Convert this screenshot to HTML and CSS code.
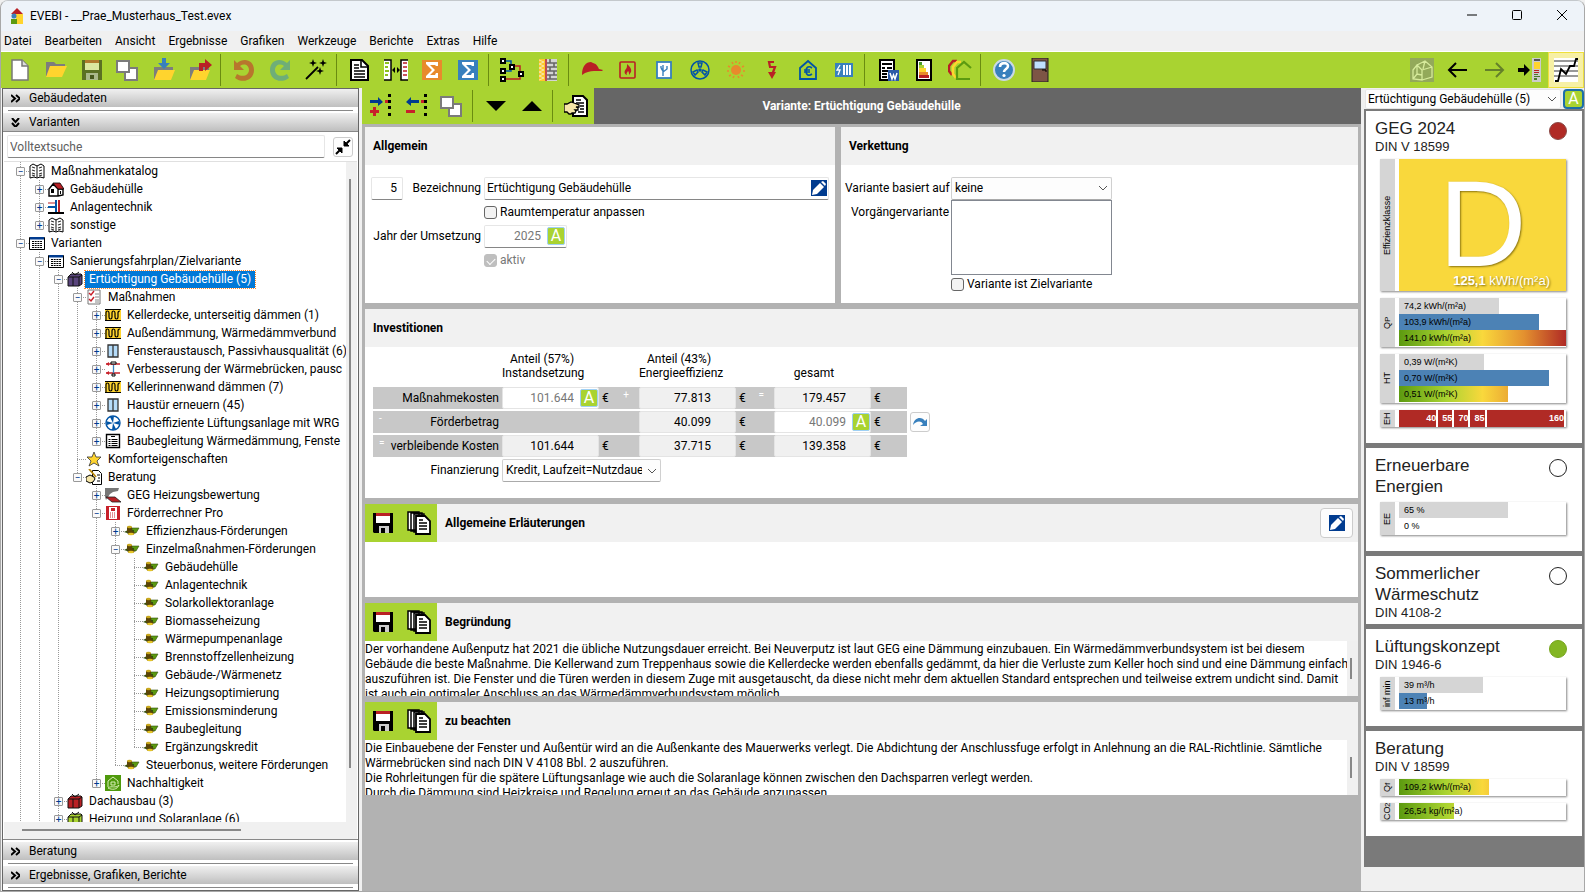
FILE: index.html
```html
<!DOCTYPE html>
<html lang="de">
<head>
    <meta charset="UTF-8">
    <meta name="viewport" content="width=device-width, initial-scale=1.0">
    <title>EVEBI - __Prae_Musterhaus_Test.evex</title>
    <link rel="stylesheet" href="styles.css">
</head>
<body>
    <!-- Icon sprite -->
    <svg class="sprite" xmlns="http://www.w3.org/2000/svg">
        <symbol id="i-new" viewBox="0 0 24 24"><path d="M4 2h10l6 6v14H4z" fill="#fff" stroke="#777" stroke-width="1.5"/><path d="M14 2v6h6" fill="#ddd" stroke="#777" stroke-width="1.5"/></symbol>
        <symbol id="i-open" viewBox="0 0 24 24"><path d="M2 4h8l2 2h9v5H2z" fill="#7d7d7d"/><path d="M2 4v14h3V8z" fill="#7d7d7d"/><path d="M6 8h17l-5 11H2z" fill="#ffd42e"/></symbol>
        <symbol id="i-save" viewBox="0 0 24 24"><path d="M2 2h20v20H2z" fill="#5a7023"/><path d="M5 2h14v3H5z" fill="#b07a2c"/><path d="M5 5h14v7H5z" fill="#dbe79f"/><path d="M6 15h12v7H6z" fill="#a9b88a"/><path d="M10 17h4v4h-4z" fill="#46571c"/></symbol>
        <symbol id="i-copy" viewBox="0 0 24 24"><path d="M9 10h12v12H9z" fill="#fff" stroke="#7b7b7b" stroke-width="2"/><path d="M1 3h12v11H1z" fill="#fff" stroke="#7b7b7b" stroke-width="2"/></symbol>
        <symbol id="i-import" viewBox="0 0 24 24"><path d="M2 9h19v3L6 13v9H2z" fill="#7d7d7d"/><path d="M6 12h17l-4 10H2z" fill="#ffd42e"/><path d="M10 0h4v5h4l-6 6-6-6h4z" fill="#3880bd"/></symbol>
        <symbol id="i-export" viewBox="0 0 24 24"><path d="M2 9h19v3L6 13v9H2z" fill="#7d7d7d"/><path d="M6 12h16l-4 10H2z" fill="#ffd42e"/><path d="M11 13V5h6V1l7 6-7 6V9h-2v4z" fill="#b92025"/></symbol>
        <symbol id="i-undo" viewBox="0 0 24 24"><path d="M2 2v10h10L8 8c4-3 9-1 9 4s-6 8-12 4l-2 4c8 6 19 2 19-8S12-1 5 5z" fill="#b8762d"/></symbol>
        <symbol id="i-redo" viewBox="0 0 24 24"><path d="M22 2v10H12l4-4c-4-3-9-1-9 4s6 8 12 4l2 4C13 26 2 22 2 12S12-1 19 5z" fill="#6fae77"/></symbol>
        <symbol id="i-wand" viewBox="0 0 24 24"><path d="M2 21L14 9" stroke="#000" stroke-width="1.8"/><path d="M9 1l1 3 3 1-3 1-1 3-1-3-3-1 3-1zM19 1l1 3 3 1-3 1-1 3-1-3-3-1 3-1zM16 9l1 3 3 1-3 1-1 3-1-3-3-1 3-1z" fill="#000"/></symbol>
        <symbol id="i-doc" viewBox="0 0 24 24"><path d="M3 2h11l6 6v14H3z" fill="#fff" stroke="#000" stroke-width="2"/><path d="M13 2v7h7M6 7h5M6 10h5M6 13h11M6 16h11M6 19h11" fill="none" stroke="#000" stroke-width="1.6"/></symbol>
        <symbol id="i-compare" viewBox="0 0 24 24"><path d="M0 2h7v20H0M24 2h-7v20h7" fill="#fff" stroke="#000" stroke-width="1.5"/><path d="M1 5h4M1 9h3M1 13h4M1 17h3" stroke="#8cbf1f" stroke-width="2"/><path d="M19 5h4M19 9h4M19 13h4M19 17h4" stroke="#b92025" stroke-width="1.5"/><path d="M8 12l3-3v6zM16 12l-3-3v6z" fill="#000"/></symbol>
        <symbol id="i-sum" viewBox="0 0 24 24"><path d="M2 2h20v20H2z" fill="currentColor"/><path d="M6 4h12v4h-2l-1-1h-5l5 5-5 5h5l1-2h2v5H6v-2l6-6-6-6z" fill="#fff"/></symbol>
        <symbol id="i-flow" viewBox="0 0 24 24"><path d="M4 3h7v5h2M4 13h7V9" fill="none" stroke="#0054a6" stroke-width="1.5"/><path d="M14 8h6v6M5 21h15v-6" fill="none" stroke="#b92025" stroke-width="1.5"/><path d="M0 0h6v6H0zM0 10h6v6H0zM0 18h6v6H0zM9 6h6v6H9zM18 13h6v6h-6z" fill="#000"/><path d="M2 2h2v2H2zM2 12h2v2H2zM2 20h2v2H2zM11 8h2v2h-2zM20 15h2v2h-2z" fill="#fff"/></symbol>
        <symbol id="i-wall" viewBox="0 0 24 24"><path d="M3 1h18v22H3z" fill="#d4d4d4"/><path d="M3 1h6v22H3z" fill="#ffc928"/><path d="M3 2l5 2-5 2 5 2-5 2 5 2-5 2 5 2-5 2 5 2-5 2" fill="none" stroke="#f6e7ae" stroke-width="1"/><path d="M10 1v22" stroke="#b92025" stroke-width="1.5"/><path d="M11 5h10M11 9h10M11 13h10M11 17h10M11 21h10M14 1v4M18 5v4M14 9v4M18 13v4M14 17v4" stroke="#666" stroke-width="1.6"/></symbol>
        <symbol id="i-cap" viewBox="0 0 24 24"><path d="M2 17C2 8 6 4 11 4l2 1c4 1 5 4 6 6l4 1-1 1H14c-4 0-8 1-12 4z" fill="#b92025"/></symbol>
        <symbol id="i-fire" viewBox="0 0 24 24"><rect x="4" y="4" width="15" height="16" rx="1" fill="none" stroke="#b92025" stroke-width="1.6"/><path d="M11 6c3 3 5 5 4 8l-2 3c0-2 0-3-1-4-1 2-2 2-1 4-3-1-3-4-1-6 1-1 1-3 1-5z" fill="#b92025"/></symbol>
        <symbol id="i-fork" viewBox="0 0 24 24"><rect x="5" y="4" width="14" height="16" fill="#fff" stroke="#3880bd" stroke-width="1.8"/><path d="M11 7v11M9 8v2M15 8v3l-4 3M9 10l2 3" fill="none" stroke="#3880bd" stroke-width="1.4"/></symbol>
        <symbol id="i-fan" viewBox="0 0 24 24"><circle cx="12" cy="12" r="9" fill="none" stroke="#0054a6" stroke-width="1.5"/><circle cx="12" cy="12" r="1.8" fill="#0054a6"/><path d="M10 5h4l-1 4h-2zM5 14l4-2 1 2-3 3zM19 14l-4-2-1 2 3 3z" fill="none" stroke="#0054a6" stroke-width="1.5"/></symbol>
        <symbol id="i-sun" viewBox="0 0 24 24"><circle cx="12" cy="12" r="5" fill="#e88a2c"/><path d="M8 4l1 2M16 4l-1 2M4 8l2 1M20 8l-2 1M3 13h2M21 13h-2M5 18l2-1M19 18l-2-1M9 20l1-2M15 20l-1-2M12 3v2" stroke="#e88a2c" stroke-width="1.5"/></symbol>
        <symbol id="i-bolt" viewBox="0 0 24 24"><path d="M14 4H9l1 5h5l-3 8" fill="none" stroke="#b92025" stroke-width="2.2"/><path d="M8 14h8l-4 7z" fill="#b92025"/></symbol>
        <symbol id="i-euro" viewBox="0 0 24 24"><path d="M4 21V10l8-7 8 7v11z" fill="none" stroke="#0054a6" stroke-width="1.8"/><path d="M16 10c-4-3-6 0-6 3s2 6 6 3M8 12h6M8 14h6" fill="none" stroke="#0054a6" stroke-width="1.6"/></symbol>
        <symbol id="i-heat" viewBox="0 0 24 24"><path d="M3 5h18v14H3z" fill="#3880bd"/><path d="M11 7h2v10h-2zM14 7h2v10h-2zM17 7h2v10h-2z" fill="#fff"/><path d="M8 7l-3 5h3l-2 5" fill="none" stroke="#fff" stroke-width="1.3"/></symbol>
        <symbol id="i-word" viewBox="0 0 24 24"><path d="M4 2h14v20H4z" fill="#fff" stroke="#000" stroke-width="2"/><path d="M6 6h10M6 10h3M11 10h5M6 13h6M6 16h5M6 19h5" stroke="#000" stroke-width="2"/><path d="M12 12h11v11H12z" fill="#2d5aa8"/><path d="M14 15l2 6 1.500-4 1.500 4 2-6" fill="none" stroke="#fff" stroke-width="1.5"/></symbol>
        <symbol id="i-label" viewBox="0 0 24 24"><path d="M5 2h14v20H5z" fill="#fff" stroke="#000" stroke-width="2"/><path d="M7 4h3v3H7z" fill="#4a9b2a"/><path d="M7 7h5v3H7z" fill="#a9d331"/><path d="M7 10h7v4H7z" fill="#ffd42e"/><path d="M7 14h9v3H7z" fill="#e88a2c"/><path d="M7 17h10v3H7z" fill="#b92025"/></symbol>
        <symbol id="i-houses" viewBox="0 0 24 24"><path d="M9 3H5L1 8v5l3 4" fill="none" stroke="#b92025" stroke-width="2.5"/><path d="M13 4H9L5 9v7l3 4" fill="none" stroke="#ffd42e" stroke-width="2.500"/><path d="M23 10l-7-6-7 6v11h13" fill="none" stroke="#5c9a10" stroke-width="2.2"/></symbol>
        <symbol id="i-help" viewBox="0 0 24 24"><circle cx="12" cy="12" r="10" fill="#3880bd" stroke="#c9d8e6" stroke-width="2"/><path d="M8 9c0-5 8-5 8-1 0 3-4 3-4 6" fill="none" stroke="#fff" stroke-width="2.6"/><circle cx="12" cy="17.500" r="1.600" fill="#fff"/></symbol>
        <symbol id="i-door" viewBox="0 0 24 24"><path d="M4 0h16v24H4z" fill="#7d5545" stroke="#222"/><path d="M6 3h12v8H6z" fill="#bfe0ff" stroke="#333"/><path d="M14 12h4v2" fill="none" stroke="#000"/></symbol>
        <symbol id="i-3d" viewBox="0 0 24 24"><path d="M0 0h24v24H0z" fill="#93a95a"/><path d="M3 12l4-5 5 5v10l-9-1zM7 7l8-4 7 6v10l-10 3M12 12l10-3M7 7v9M3 21l4-5 5 1M15 3l-2 8" fill="none" stroke="#d6ea9b" stroke-width="1.300"/></symbol>
        <symbol id="i-left" viewBox="0 0 24 24"><path d="M21 12H3M10 5l-7 7 7 7" fill="none" stroke="currentColor" stroke-width="2"/></symbol>
        <symbol id="i-right" viewBox="0 0 24 24"><path d="M3 12h18M14 5l7 7-7 7" fill="none" stroke="currentColor" stroke-width="2"/></symbol>
        <symbol id="i-dock" viewBox="0 0 24 24"><path d="M0 10h6V6l6 6-6 6v-4H0z" fill="#000"/><path d="M14 0h9v24h-9z" fill="#ccc"/><path d="M16 1h6v2h-6z" fill="#555"/><path d="M16 4h6v7h-6z" fill="#ffd42e"/><path d="M16 12h5v1h-5zM16 14h5v1h-5z" fill="#b92025"/><path d="M16 16h4v1h-4zM16 18h6v1h-6zM16 20h3v2h-3z" fill="#4a7b2a"/></symbol>
        <symbol id="i-chart" viewBox="0 0 24 24"><path d="M0 0h24v24H0z" fill="#fff"/><path d="M0 3h24M0 8h24M0 13h24M0 18h24" stroke="#999" stroke-width="2"/><path d="M1 23h3l3-12 5 5 4-8h4l2-7h2" fill="none" stroke="#000" stroke-width="1.8"/></symbol>
        <symbol id="i-add" viewBox="0 0 24 24"><path d="M2 6h8V3l5 5-5 4V9H2z" fill="#003b8f"/><path d="M5 13h3v3h3v3H8v3H5v-3H2v-3h3z" fill="#c8202a"/><path d="M17 6h3v3h-3z" fill="#c8202a"/><path d="M20 0h3v3h-3zM20 6h3v3h-3zM20 12h3v3h-3zM20 19h3v3h-3z" fill="#000"/></symbol>
        <symbol id="i-del" viewBox="0 0 24 24"><path d="M15 6H7V3L2 8l5 4V9h8z" fill="#003b8f"/><path d="M2 16h9v3H2z" fill="#c8202a"/><path d="M17 6h3v3h-3z" fill="#c8202a"/><path d="M20 0h3v3h-3zM20 6h3v3h-3zM20 12h3v3h-3zM20 19h3v3h-3z" fill="#000"/></symbol>
        <symbol id="i-down" viewBox="0 0 24 24"><path d="M2 7h20L12 17z" fill="#000"/></symbol>
        <symbol id="i-up" viewBox="0 0 24 24"><path d="M2 17h20L12 7z" fill="#000"/></symbol>
        <symbol id="i-hand" viewBox="0 0 24 24"><path d="M9 2h10l4 4v16H9z" fill="#fff" stroke="#000" stroke-width="2"/><path d="M12 6h5M12 9h8M16 12h4M16 15h4M14 18h6" stroke="#000" stroke-width="1.5"/><path d="M0 10h3l4-2 3 1 5 2v2h-3l2 1v2h-3l1 1-1 2h-3l-1 1H5l-2-2H0z" fill="#f6e6a8" stroke="#000" stroke-width="1.3"/></symbol>
        <symbol id="i-disk" viewBox="0 0 24 24"><path d="M2 2h20v20H3l-1-1z" fill="#000"/><path d="M5 2h14v3H5z" fill="#b92025"/><path d="M5 5h14v7H5z" fill="#fff"/><path d="M8 15h10v7H8z" fill="#ccc"/><path d="M10 17h4v5h-4z" fill="#000"/></symbol>
        <symbol id="i-pages" viewBox="0 0 24 24"><path d="M1 1h11v18H1zM4 2h11v18H4zM7 3h10v18H7z" fill="#fff" stroke="#000" stroke-width="1.5"/><path d="M9 5h9l5 5v13H9z" fill="#fff" stroke="#000" stroke-width="1.800"/><path d="M12 9h4M12 12h8M12 15h8M12 18h8" stroke="#000" stroke-width="1.5"/></symbol>
        <symbol id="i-pencil" viewBox="0 0 16 16"><path d="M0 0h16v16H0z" fill="#003b8f"/><path d="M1 15l1-5 7-7 4 4-7 7z" fill="#fff"/><path d="M10 2l2-1 3 3-1 2z" fill="#fff"/></symbol>
        <symbol id="i-jump" viewBox="0 0 16 16"><path d="M1 11c1-8 9-9 12-4l2-2v7H8l3-2c-2-4-7-3-10 1z" fill="#3880bd"/></symbol>
        <symbol id="i-collapse" viewBox="0 0 16 16"><path d="M15 1L11 5M1 15l4-4" stroke="#000" stroke-width="2"/><path d="M9 2v5h5zM7 14V9H2z" fill="#000" stroke="#000"/></symbol>
        <symbol id="i-logo" viewBox="0 0 16 18"><path d="M2 7l6-6 6 6z" fill="#b92025"/><path d="M7 7h7v10H7z" fill="#ffd42e"/><path d="M2 7h5v5H2z" fill="#dfe8f0"/><circle cx="5" cy="9" r="2.500" fill="#3880bd"/><path d="M2 12h6v5H2z" fill="#5c9a10"/></symbol>

        <symbol id="t-book" viewBox="0 0 16 16"><path d="M1 3l3-2 4 2 4-2 3 2v12l-4-1-3 1-3-1-4 1z" fill="#fff" stroke="#000"/><path d="M8 2v13M3 4l3 1M3 7l3 1M3 10l3 1M13 4l-3 1M13 7l-3 1M13 10l-3 1M3 12l3 1M13 12l-3 1" stroke="#333" stroke-width="1.2"/></symbol>
        <symbol id="t-house" viewBox="0 0 16 16"><path d="M1 8l4-5 5 5v7H1zM10 8h5v6l-5 1" fill="#fff" stroke="#000" stroke-width="1.4"/><path d="M5 2h7l4 6h-6z" fill="#b92025" stroke="#000" stroke-width=".8"/><path d="M3 8h3v4H3zM12 10h1v3h-1z" fill="#000"/></symbol>
        <symbol id="t-pipes" viewBox="0 0 16 16"><path d="M0 4h8" stroke="#b92025" stroke-width="1.2"/><path d="M0 8h8M8 1v12" stroke="#0054a6" stroke-width="2"/><path d="M11 1v12" stroke="#b92025" stroke-width="2"/><path d="M0 14h16" stroke="#000" stroke-width="2"/></symbol>
        <symbol id="t-table" viewBox="0 0 16 16"><path d="M.5 2.500h15v12H.5z" fill="#fff" stroke="#000"/><path d="M1 2h14v2.500H1z" fill="#003b8f"/><path d="M3 6.500h10M3 8.500h10M3 10.500h10M3 12.500h10" stroke="#000" stroke-dasharray="2 .7"/></symbol>
        <symbol id="t-box" viewBox="0 0 16 16"><path d="M1 6l3-3h10l1 1v9l-3 2H1z" fill="currentColor" stroke="#111"/><path d="M1 6h11v9M12 6l3-2M6 6v9M5 1l3 3 4-3" fill="none" stroke="#111"/></symbol>
        <symbol id="t-checks" viewBox="0 0 16 16"><path d="M2 1h12v14H2z" fill="#fff" stroke="#777"/><path d="M3 4l2 2 3-4M3 10l2 2 3-4" fill="none" stroke="#c8202a" stroke-width="1.4"/><path d="M9 5h4M9 8h4M9 11h4M9 13h4" stroke="#888"/></symbol>
        <symbol id="t-insul" viewBox="0 0 16 16"><path d="M0 2h16v12H0z" fill="#ffd42e"/><path d="M0 2.500h16M0 13.500h16" stroke="#000"/><path d="M1 13V6q0-2 1.500-2T4 6v4q0 2 1.500 2T7 10V6q0-2 1.500-2T10 6v4q0 2 1.500 2T13 10V6q0-2 2-2" fill="none" stroke="#000" stroke-width="1.200"/></symbol>
        <symbol id="t-window" viewBox="0 0 16 16"><path d="M3 2h10v12H3z" fill="#b5dcfa" stroke="#333" stroke-width="1.300"/><path d="M8 2v12" stroke="#333" stroke-width="1.300"/></symbol>
        <symbol id="t-bridge" viewBox="0 0 16 16"><path d="M1 3h14M1 12h14" stroke="#c8202a" stroke-width="1.300"/><path d="M4 1L1 3l3 2M4 10l-3 2 3 2" fill="#c8202a"/><path d="M8.500 4v8" stroke="#3880bd" stroke-width="1.300"/><path d="M6 1h5v2H6zM7 13h3v2H7z" fill="#fff" stroke="#000"/></symbol>
        <symbol id="t-fan" viewBox="0 0 16 16"><circle cx="8" cy="8" r="7" fill="#fff" stroke="#0054a6" stroke-width="1.400"/><path d="M8 8L5 2l4-1zM8 8l6-2 1 4zM8 8l3 6-4 1zM8 8l-6 2-1-4z" fill="#0054a6"/></symbol>
        <symbol id="t-note" viewBox="0 0 16 16"><path d="M1.500 1.500h13v13h-13z" fill="#fff" stroke="#000" stroke-width="1.400"/><path d="M6 3.500h4M3.500 6.500h2M6.500 6.500h6M3.500 8.500h2M6.500 8.500h6M3.500 10.500h2M6.500 10.500h6M3.500 12.500h2M6.500 12.500h6" stroke="#000"/></symbol>
        <symbol id="t-star" viewBox="0 0 16 16"><path d="M8 1l2 5h5l-4 4 2 5-5-3-5 3 2-5-4-4h5z" fill="#ffd42e" stroke="#333" stroke-width=".8"/></symbol>
        <symbol id="t-advice" viewBox="0 0 16 16"><path d="M6.500 1.500h6l3 3v11h-9z" fill="#fff" stroke="#000"/><path d="M0 8l4-2 4 2 1 2-2 3-3 1-4-2z" fill="#f6e6a8" stroke="#000"/><path d="M3 0l7 8" stroke="#b8860b" stroke-width="1.800"/><path d="M11 6h3M12 9h2M11 12h3" stroke="#000"/></symbol>
        <symbol id="t-geg" viewBox="0 0 16 16"><path d="M0 1h14l-1 3-5 1-3 2-4 6-1-3z" fill="#777"/><path d="M1 10h9l6 5H7z" fill="#b92025" stroke="#222" stroke-width=".8"/></symbol>
        <symbol id="t-calc" viewBox="0 0 16 16"><path d="M1 1h14v14H1z" fill="#c8202a"/><path d="M4 2h8v12H4z" fill="#fff"/><path d="M6 3h4v3H6z" fill="#c8202a"/><path d="M5 8h6M5 10h6M5 12h6" stroke="#c8202a" stroke-dasharray="1 1"/></symbol>
        <symbol id="t-coin" viewBox="0 0 16 16"><path d="M8 5h7l-3 5H8z" fill="#5c9a10" stroke="#33500f" stroke-width=".6"/><path d="M0 9l4-2h6v3l-4 1z" fill="#33500f"/><path d="M3 4h5v5H3z" fill="#5a4508"/><ellipse cx="5.500" cy="4" rx="2.500" ry="1.200" fill="#c9a81c"/><ellipse cx="7" cy="10" rx="3.500" ry="2" fill="#5a4508"/><ellipse cx="7" cy="11" rx="3" ry="1.200" fill="#e5c528"/></symbol>
        <symbol id="t-eco" viewBox="0 0 16 16"><path d="M0 0h16v16H0z" fill="#4f9a0c"/><path d="M3 12V6l5-4 5 4v3M6 7h4v3H6zM3 13c4-3 7 1 11-3-2 5-7 5-11 3z" fill="none" stroke="#d9efb8"/></symbol>
    </svg>

    <div class="window">
        <header class="titlebar">
            <svg class="logo"><use href="#i-logo"/></svg>
            <h1>EVEBI - __Prae_Musterhaus_Test.evex</h1>
            <button type="button" class="win-btn" aria-label="Minimieren"><svg viewBox="0 0 10 10"><path d="M0 5h10"/></svg></button>
            <button type="button" class="win-btn" aria-label="Maximieren"><svg viewBox="0 0 10 10"><rect x=".5" y=".5" width="9" height="9" rx="1"/></svg></button>
            <button type="button" class="win-btn" aria-label="Schließen"><svg viewBox="0 0 10 10"><path d="M0 0l10 10M10 0L0 10"/></svg></button>
        </header>

        <nav class="menubar">
            <a href="#">Datei</a>
            <a href="#">Bearbeiten</a>
            <a href="#">Ansicht</a>
            <a href="#">Ergebnisse</a>
            <a href="#">Grafiken</a>
            <a href="#">Werkzeuge</a>
            <a href="#">Berichte</a>
            <a href="#">Extras</a>
            <a href="#">Hilfe</a>
        </nav>

        <div class="toolbar main-toolbar">
            <button type="button" aria-label="Neu"><svg><use href="#i-new"/></svg></button>
            <button type="button" aria-label="Öffnen"><svg><use href="#i-open"/></svg></button>
            <button type="button" aria-label="Speichern"><svg><use href="#i-save"/></svg></button>
            <button type="button" aria-label="Kopieren"><svg><use href="#i-copy"/></svg></button>
            <button type="button" aria-label="Importieren"><svg><use href="#i-import"/></svg></button>
            <button type="button" aria-label="Exportieren"><svg><use href="#i-export"/></svg></button>
            <span class="sep"></span>
            <button type="button" aria-label="Rückgängig"><svg><use href="#i-undo"/></svg></button>
            <button type="button" aria-label="Wiederholen"><svg><use href="#i-redo"/></svg></button>
            <button type="button" aria-label="Assistent"><svg><use href="#i-wand"/></svg></button>
            <span class="sep"></span>
            <button type="button" aria-label="Dokument"><svg><use href="#i-doc"/></svg></button>
            <button type="button" aria-label="Vergleich"><svg><use href="#i-compare"/></svg></button>
            <button type="button" class="orange" aria-label="Summe"><svg><use href="#i-sum"/></svg></button>
            <button type="button" class="blue" aria-label="Summe Varianten"><svg><use href="#i-sum"/></svg></button>
            <span class="sep"></span>
            <button type="button" aria-label="Struktur"><svg><use href="#i-flow"/></svg></button>
            <button type="button" aria-label="Bauteile"><svg><use href="#i-wall"/></svg></button>
            <span class="sep"></span>
            <button type="button" aria-label="Berater"><svg><use href="#i-cap"/></svg></button>
            <button type="button" aria-label="Heizung"><svg><use href="#i-fire"/></svg></button>
            <button type="button" aria-label="Warmwasser"><svg><use href="#i-fork"/></svg></button>
            <button type="button" aria-label="Lüftung"><svg><use href="#i-fan"/></svg></button>
            <button type="button" aria-label="Solar"><svg><use href="#i-sun"/></svg></button>
            <button type="button" aria-label="Strom"><svg><use href="#i-bolt"/></svg></button>
            <button type="button" aria-label="Kosten"><svg><use href="#i-euro"/></svg></button>
            <button type="button" aria-label="Heizkörper"><svg><use href="#i-heat"/></svg></button>
            <span class="sep"></span>
            <button type="button" aria-label="Word-Bericht"><svg><use href="#i-word"/></svg></button>
            <button type="button" aria-label="Energieausweis"><svg><use href="#i-label"/></svg></button>
            <button type="button" aria-label="Sanierungsfahrplan"><svg><use href="#i-houses"/></svg></button>
            <span class="sep"></span>
            <button type="button" aria-label="Hilfe"><svg><use href="#i-help"/></svg></button>
            <button type="button" aria-label="Beenden"><svg><use href="#i-door"/></svg></button>
            <span class="spacer"></span>
            <button type="button" aria-label="3D-Ansicht"><svg><use href="#i-3d"/></svg></button>
            <button type="button" aria-label="Zurück"><svg><use href="#i-left"/></svg></button>
            <button type="button" class="faded" aria-label="Vor"><svg><use href="#i-right"/></svg></button>
            <button type="button" aria-label="Andocken"><svg><use href="#i-dock"/></svg></button>
            <button type="button" class="pressed" aria-label="Diagramm"><svg><use href="#i-chart"/></svg></button>
        </div>

        <div class="workspace">
            <!-- Navigation -->
            <aside class="sidebar">
                <button type="button" class="fold">
                    <svg viewBox="0 0 9 9"><path d="M0 1l4 3.500L0 8M5 1l4 3.500L5 8"/></svg>Gebäudedaten
                </button>
                <hr>
                <button type="button" class="fold">
                    <svg viewBox="0 0 9 9"><path d="M1 0l3.500 4L8 0M1 5l3.500 4L8 5"/></svg>Varianten
                </button>
                <div class="tree-panel">
                    <div class="search-row">
                        <input type="text" class="field" placeholder="Volltextsuche" aria-label="Volltextsuche">
                        <button type="button" class="small-btn" aria-label="Alle zuklappen"><svg><use href="#i-collapse"/></svg></button>
                    </div>
                    <div class="tree-box">
                        <div class="tree">
                            <ul class="more">
                                <li><div class="row"><button type="button" class="exp">−</button><svg><use href="#t-book"/></svg><span>Maßnahmenkatalog</span></div>
                                    <ul>
                                        <li><div class="row"><button type="button" class="exp">+</button><svg><use href="#t-house"/></svg><span>Gebäudehülle</span></div></li>
                                        <li><div class="row"><button type="button" class="exp">+</button><svg><use href="#t-pipes"/></svg><span>Anlagentechnik</span></div></li>
                                        <li><div class="row"><button type="button" class="exp">+</button><svg><use href="#t-book"/></svg><span>sonstige</span></div></li>
                                    </ul>
                                </li>
                                <li><div class="row"><button type="button" class="exp">−</button><svg><use href="#t-table"/></svg><span>Varianten</span></div>
                                    <ul class="more">
                                        <li><div class="row"><button type="button" class="exp">−</button><svg><use href="#t-table"/></svg><span>Sanierungsfahrplan/Zielvariante</span></div>
                                            <ul class="more">
                                                <li><div class="row"><button type="button" class="exp">−</button><svg class="box-violet"><use href="#t-box"/></svg><span class="selected">Ertüchtigung Gebäudehülle (5)</span></div>
                                                    <ul>
                                                        <li><div class="row"><button type="button" class="exp">−</button><svg><use href="#t-checks"/></svg><span>Maßnahmen</span></div>
                                                            <ul>
                                                                <li><div class="row"><button type="button" class="exp">+</button><svg><use href="#t-insul"/></svg><span>Kellerdecke, unterseitig dämmen (1)</span></div></li>
                                                                <li><div class="row"><button type="button" class="exp">+</button><svg><use href="#t-insul"/></svg><span>Außendämmung, Wärmedämmverbund</span></div></li>
                                                                <li><div class="row"><button type="button" class="exp">+</button><svg><use href="#t-window"/></svg><span>Fensteraustausch, Passivhausqualität (6)</span></div></li>
                                                                <li><div class="row"><button type="button" class="exp">+</button><svg><use href="#t-bridge"/></svg><span>Verbesserung der Wärmebrücken, pausc</span></div></li>
                                                                <li><div class="row"><button type="button" class="exp">+</button><svg><use href="#t-insul"/></svg><span>Kellerinnenwand dämmen (7)</span></div></li>
                                                                <li><div class="row"><button type="button" class="exp">+</button><svg><use href="#t-window"/></svg><span>Haustür erneuern (45)</span></div></li>
                                                                <li><div class="row"><button type="button" class="exp">+</button><svg><use href="#t-fan"/></svg><span>Hocheffiziente Lüftungsanlage mit WRG</span></div></li>
                                                                <li><div class="row"><button type="button" class="exp">+</button><svg><use href="#t-note"/></svg><span>Baubegleitung Wärmedämmung, Fenste</span></div></li>
                                                            </ul>
                                                        </li>
                                                        <li><div class="row leaf"><svg><use href="#t-star"/></svg><span>Komforteigenschaften</span></div></li>
                                                        <li><div class="row"><button type="button" class="exp">−</button><svg><use href="#t-advice"/></svg><span>Beratung</span></div>
                                                            <ul>
                                                                <li><div class="row"><button type="button" class="exp">+</button><svg><use href="#t-geg"/></svg><span>GEG Heizungsbewertung</span></div></li>
                                                                <li><div class="row"><button type="button" class="exp">−</button><svg><use href="#t-calc"/></svg><span>Förderrechner Pro</span></div>
                                                                    <ul>
                                                                        <li><div class="row"><button type="button" class="exp">+</button><svg><use href="#t-coin"/></svg><span>Effizienzhaus-Förderungen</span></div></li>
                                                                        <li><div class="row"><button type="button" class="exp">−</button><svg><use href="#t-coin"/></svg><span>Einzelmaßnahmen-Förderungen</span></div>
                                                                            <ul>
                                                                                <li><div class="row leaf"><svg><use href="#t-coin"/></svg><span>Gebäudehülle</span></div></li>
                                                                                <li><div class="row leaf"><svg><use href="#t-coin"/></svg><span>Anlagentechnik</span></div></li>
                                                                                <li><div class="row leaf"><svg><use href="#t-coin"/></svg><span>Solarkollektoranlage</span></div></li>
                                                                                <li><div class="row leaf"><svg><use href="#t-coin"/></svg><span>Biomasseheizung</span></div></li>
                                                                                <li><div class="row leaf"><svg><use href="#t-coin"/></svg><span>Wärmepumpenanlage</span></div></li>
                                                                                <li><div class="row leaf"><svg><use href="#t-coin"/></svg><span>Brennstoffzellenheizung</span></div></li>
                                                                                <li><div class="row leaf"><svg><use href="#t-coin"/></svg><span>Gebäude-/Wärmenetz</span></div></li>
                                                                                <li><div class="row leaf"><svg><use href="#t-coin"/></svg><span>Heizungsoptimierung</span></div></li>
                                                                                <li><div class="row leaf"><svg><use href="#t-coin"/></svg><span>Emissionsminderung</span></div></li>
                                                                                <li><div class="row leaf"><svg><use href="#t-coin"/></svg><span>Baubegleitung</span></div></li>
                                                                                <li><div class="row leaf"><svg><use href="#t-coin"/></svg><span>Ergänzungskredit</span></div></li>
                                                                            </ul>
                                                                        </li>
                                                                        <li><div class="row leaf"><svg><use href="#t-coin"/></svg><span>Steuerbonus, weitere Förderungen</span></div></li>
                                                                    </ul>
                                                                </li>
                                                                <li><div class="row"><button type="button" class="exp">+</button><svg><use href="#t-eco"/></svg><span>Nachhaltigkeit</span></div></li>
                                                            </ul>
                                                        </li>
                                                    </ul>
                                                </li>
                                                <li><div class="row"><button type="button" class="exp">+</button><svg class="box-red"><use href="#t-box"/></svg><span>Dachausbau (3)</span></div></li>
                                                <li><div class="row"><button type="button" class="exp">+</button><svg class="box-green"><use href="#t-box"/></svg><span>Heizung und Solaranlage (6)</span></div></li>
                                            </ul>
                                        </li>
                                    </ul>
                                </li>
                            </ul>
                        </div>
                        <div class="vscroll"><span></span></div>
                    </div>
                    <div class="hscroll"><span></span></div>
                </div>
                <button type="button" class="fold">
                    <svg viewBox="0 0 9 9"><path d="M0 1l4 3.500L0 8M5 1l4 3.500L5 8"/></svg>Beratung
                </button>
                <hr>
                <button type="button" class="fold">
                    <svg viewBox="0 0 9 9"><path d="M0 1l4 3.500L0 8M5 1l4 3.500L5 8"/></svg>Ergebnisse, Grafiken, Berichte
                </button>
                <hr>
            </aside>

            <!-- Variante -->
            <main class="content">
                <div class="content-head">
                    <div class="toolbar">
                        <button type="button" aria-label="Hinzufügen"><svg><use href="#i-add"/></svg></button>
                        <button type="button" aria-label="Entfernen"><svg><use href="#i-del"/></svg></button>
                        <button type="button" aria-label="Kopieren"><svg><use href="#i-copy"/></svg></button>
                        <span class="sep"></span>
                        <button type="button" aria-label="Nach unten"><svg><use href="#i-down"/></svg></button>
                        <button type="button" aria-label="Nach oben"><svg><use href="#i-up"/></svg></button>
                        <span class="sep"></span>
                        <button type="button" aria-label="Bericht"><svg><use href="#i-hand"/></svg></button>
                    </div>
                    <h2>Variante: Ertüchtigung Gebäudehülle</h2>
                </div>

                <div class="cards">
                    <div class="card-pair">
                        <section class="card">
                            <h3>Allgemein</h3>
                            <div class="form form-general">
                                <div class="name-label">
                                    <input type="text" class="field num" value="5" aria-label="Nummer">
                                    <label for="bezeichnung">Bezeichnung</label>
                                </div>
                                <div class="field with-icon">
                                    <input type="text" id="bezeichnung" value="Ertüchtigung Gebäudehülle">
                                    <button type="button" class="icon-btn" aria-label="Bearbeiten"><svg><use href="#i-pencil"/></svg></button>
                                </div>
                                <label class="check"><input type="checkbox">Raumtemperatur anpassen</label>
                                <label for="jahr">Jahr der Umsetzung</label>
                                <div class="field with-icon year">
                                    <input type="text" id="jahr" class="muted" value="2025">
                                    <button type="button" class="auto">A</button>
                                </div>
                                <label class="check muted"><input type="checkbox" checked disabled>aktiv</label>
                            </div>
                        </section>

                        <section class="card">
                            <h3>Verkettung</h3>
                            <div class="form form-chain">
                                <label for="basis">Variante basiert auf</label>
                                <select id="basis"><option>keine</option></select>
                                <label for="vorgaenger">Vorgängervariante</label>
                                <select id="vorgaenger" class="list" multiple></select>
                                <label class="check"><input type="checkbox">Variante ist Zielvariante</label>
                            </div>
                        </section>
                    </div>

                    <section class="card">
                        <h3>Investitionen</h3>
                        <div class="invest">
                            <table>
                                <thead>
                                    <tr>
                                        <td></td>
                                        <th scope="col">Anteil (57%)<br>Instandsetzung</th>
                                        <td></td>
                                        <th scope="col">Anteil (43%)<br>Energieeffizienz</th>
                                        <td></td>
                                        <th scope="col">gesamt</th>
                                        <td></td>
                                        <td></td>
                                    </tr>
                                </thead>
                                <tbody>
                                    <tr>
                                        <th scope="row"><div class="row-head"><label for="mk1">Maßnahmekosten</label></div></th>
                                        <td><div class="amount editable"><input type="text" id="mk1" value="101.644"><button type="button" class="auto">A</button></div></td>
                                        <td><div class="unit">€<sup>+</sup></div></td>
                                        <td><div class="amount"><input type="text" value="77.813" readonly aria-label="Maßnahmekosten Energieeffizienz"></div></td>
                                        <td><div class="unit">€<sup>=</sup></div></td>
                                        <td><div class="amount"><input type="text" value="179.457" readonly aria-label="Maßnahmekosten gesamt"></div></td>
                                        <td><div class="unit">€</div></td>
                                        <td class="plain"></td>
                                    </tr>
                                    <tr>
                                        <th scope="row"><div class="row-head"><sup>-</sup><label for="fb3">Förderbetrag</label></div></th>
                                        <td></td>
                                        <td></td>
                                        <td><div class="amount"><input type="text" value="40.099" readonly aria-label="Förderbetrag Energieeffizienz"></div></td>
                                        <td><div class="unit">€</div></td>
                                        <td><div class="amount editable"><input type="text" id="fb3" value="40.099"><button type="button" class="auto">A</button></div></td>
                                        <td><div class="unit">€</div></td>
                                        <td class="plain"><button type="button" class="small-btn" aria-label="Zum Förderrechner"><svg><use href="#i-jump"/></svg></button></td>
                                    </tr>
                                    <tr>
                                        <th scope="row"><div class="row-head"><sup>=</sup><label for="vk1">verbleibende Kosten</label></div></th>
                                        <td><div class="amount"><input type="text" id="vk1" value="101.644" readonly></div></td>
                                        <td><div class="unit">€</div></td>
                                        <td><div class="amount"><input type="text" value="37.715" readonly aria-label="verbleibende Kosten Energieeffizienz"></div></td>
                                        <td><div class="unit">€</div></td>
                                        <td><div class="amount"><input type="text" value="139.358" readonly aria-label="verbleibende Kosten gesamt"></div></td>
                                        <td><div class="unit">€</div></td>
                                        <td class="plain"></td>
                                    </tr>
                                </tbody>
                            </table>
                            <div class="finance">
                                <label for="finanzierung">Finanzierung</label>
                                <select id="finanzierung"><option>Kredit, Laufzeit=Nutzdauer</option></select>
                            </div>
                        </div>
                    </section>

                    <section class="card">
                        <div class="note-head">
                            <div class="toolbar">
                                <button type="button" aria-label="Speichern"><svg><use href="#i-disk"/></svg></button>
                                <button type="button" aria-label="Textbausteine"><svg><use href="#i-pages"/></svg></button>
                            </div>
                            <h3 id="n1">Allgemeine Erläuterungen</h3>
                            <button type="button" class="edit-btn" aria-label="Bearbeiten"><svg><use href="#i-pencil"/></svg></button>
                        </div>
                        <div class="note"><textarea aria-labelledby="n1"></textarea></div>
                    </section>

                    <section class="card">
                        <div class="note-head">
                            <div class="toolbar">
                                <button type="button" aria-label="Speichern"><svg><use href="#i-disk"/></svg></button>
                                <button type="button" aria-label="Textbausteine"><svg><use href="#i-pages"/></svg></button>
                            </div>
                            <h3 id="n2">Begründung</h3>
                        </div>
                        <div class="note">
                            <textarea aria-labelledby="n2">Der vorhandene Außenputz hat 2021 die übliche Nutzungsdauer erreicht. Bei Neuverputz ist laut GEG eine Dämmung einzubauen. Ein Wärmedämmverbundsystem ist bei diesem
Gebäude die beste Maßnahme. Die Kellerwand zum Treppenhaus sowie die Kellerdecke werden ebenfalls gedämmt, da hier die Verluste zum Keller hoch sind und eine Dämmung einfach
auszuführen ist. Die Fenster und die Türen werden in diesem Zuge mit ausgetauscht, da diese nicht mehr dem aktuellen Standard entsprechen und teilweise extrem undicht sind. Damit
ist auch ein optimaler Anschluss an das Wärmedämmverbundsystem möglich.</textarea>
                            <div class="vscroll"><span></span></div>
                        </div>
                    </section>

                    <section class="card">
                        <div class="note-head">
                            <div class="toolbar">
                                <button type="button" aria-label="Speichern"><svg><use href="#i-disk"/></svg></button>
                                <button type="button" aria-label="Textbausteine"><svg><use href="#i-pages"/></svg></button>
                            </div>
                            <h3 id="n3">zu beachten</h3>
                        </div>
                        <div class="note">
                            <textarea aria-labelledby="n3">Die Einbauebene der Fenster und Außentür wird an die Außenkante des Mauerwerks verlegt. Die Abdichtung der Anschlussfuge erfolgt in Anlehnung an die RAL-Richtlinie. Sämtliche
Wärmebrücken sind nach DIN V 4108 Bbl. 2 auszuführen.
Die Rohrleitungen für die spätere Lüftungsanlage wie auch die Solaranlage können zwischen den Dachsparren verlegt werden.
Durch die Dämmung sind Heizkreise und Regelung erneut an das Gebäude anzupassen.</textarea>
                            <div class="vscroll"><span></span></div>
                        </div>
                    </section>
                </div>
            </main>

            <!-- Kennwerte -->
            <aside class="results">
                <div class="results-head">
                    <select aria-label="Variante"><option>Ertüchtigung Gebäudehülle (5)</option></select>
                    <button type="button" class="auto">A</button>
                </div>
                <div class="results-body">
                    <section class="result">
                        <div class="result-head">
                            <div><h4>GEG 2024</h4><p>DIN V 18599</p></div>
                            <span class="lamp red"></span>
                        </div>
                        <div class="gauges">
                            <div class="gauge">
                                <span class="axis">Effizienzklasse</span>
                                <div class="class-box">
                                    <span class="letter">D</span>
                                    <span class="value"><b>125,1</b> kWh/(m²a)</span>
                                </div>
                            </div>
                            <div class="gauge">
                                <span class="axis">Q<small>P</small></span>
                                <div class="bars">
                                    <div class="bar gray" style="width: 60%">74,2 kWh/(m²a)</div>
                                    <div class="bar blue" style="width: 84%">103,9 kWh/(m²a)</div>
                                    <div class="bar scale" style="width: 100%">141,0 kWh/(m²a)</div>
                                </div>
                            </div>
                            <div class="gauge">
                                <span class="axis">HT</span>
                                <div class="bars">
                                    <div class="bar gray" style="width: 51%">0,39 W/(m²K)</div>
                                    <div class="bar blue" style="width: 90%">0,70 W/(m²K)</div>
                                    <div class="bar scale" style="width: 65%">0,51 W/(m²K)</div>
                                </div>
                            </div>
                            <div class="gauge">
                                <span class="axis">EH</span>
                                <div class="steps">
                                    <span style="flex-grow: 37">40</span>
                                    <span style="flex-grow: 14">55</span>
                                    <span style="flex-grow: 14">70</span>
                                    <span style="flex-grow: 14">85</span>
                                    <span style="flex-grow: 77">160</span>
                                </div>
                            </div>
                        </div>
                    </section>

                    <section class="result">
                        <div class="result-head">
                            <div><h4>Erneuerbare<br>Energien</h4></div>
                            <span class="lamp"></span>
                        </div>
                        <div class="gauges">
                            <div class="gauge">
                                <span class="axis">EE</span>
                                <div class="bars">
                                    <div class="bar gray" style="width: 65%">65 %</div>
                                    <div class="bar" style="width: 0%">0 %</div>
                                </div>
                            </div>
                        </div>
                    </section>

                    <section class="result">
                        <div class="result-head">
                            <div><h4>Sommerlicher<br>Wärmeschutz</h4><p>DIN 4108-2</p></div>
                            <span class="lamp"></span>
                        </div>
                    </section>

                    <section class="result">
                        <div class="result-head">
                            <div><h4>Lüftungskonzept</h4><p>DIN 1946-6</p></div>
                            <span class="lamp green"></span>
                        </div>
                        <div class="gauges">
                            <div class="gauge">
                                <span class="axis">inf min</span>
                                <div class="bars">
                                    <div class="bar gray" style="width: 50%">39 m³/h</div>
                                    <div class="bar blue" style="width: 17%">13 m³/h</div>
                                </div>
                            </div>
                        </div>
                    </section>

                    <section class="result">
                        <div class="result-head">
                            <div><h4>Beratung</h4><p>DIN V 18599</p></div>
                        </div>
                        <div class="gauges">
                            <div class="gauge">
                                <span class="axis">Q<small>f</small></span>
                                <div class="bars"><div class="bar scale" style="width: 54%">109,2 kWh/(m²a)</div></div>
                            </div>
                            <div class="gauge">
                                <span class="axis">CO<small>2</small></span>
                                <div class="bars"><div class="bar scale" style="width: 33%">26,54 kg/(m²a)</div></div>
                            </div>
                        </div>
                    </section>
                </div>
            </aside>
        </div>
    </div>
</body>
</html>
```
FILE: styles.css
```css
:root {
    --green: #a9d331;
    --gray: #b2b2b2;
    --light: #f0f0f0;
    --head: #f1f1f1;
    --red: #b02a25;
    --blue: #4c82b5;
    --navy: #003b8f;
}

* {
    box-sizing: border-box;
}

body {
    margin: 0;
    font-family: Roboto, "Noto Sans", sans-serif;
    font-size: 12px;
    line-height: 15px;
    color: #000;
    background: var(--light);
}

button, input, select, textarea {
    font: inherit;
    color: inherit;
    margin: 0;
    padding: 0;
    border: none;
    outline: none;
    background: none;
    border-radius: 0;
}

h1, h2, h3, h4, p, ul {
    margin: 0;
    padding: 0;
}

.sprite {
    display: none;
}

.muted {
    color: #777;
}

.window {
    display: flex;
    flex-direction: column;
    height: 100vh;
    border: 1px solid #a8a8a8;
    border-top-color: #c4c8cc;
    border-radius: 8px 8px 0 0;
    overflow: hidden;
}

/* Title bar and menu */
.titlebar {
    display: flex;
    align-items: center;
    flex: none;
    height: 30px;
    padding-left: 8px;
    background: #eef3f9;
}

.titlebar h1 {
    flex: 1;
    font-size: 12px;
    font-weight: normal;
}

.logo {
    width: 16px;
    height: 18px;
    margin-right: 5px;
}

.win-btn {
    width: 45px;
    height: 28px;
}

.win-btn svg {
    width: 10px;
    height: 10px;
    fill: none;
    stroke: #000;
    overflow: visible;
}

.menubar {
    display: flex;
    align-items: center;
    flex: none;
    gap: 13px;
    height: 21px;
    padding-left: 3px;
    border-bottom: 1px solid #fff;
}

.menubar a {
    color: #000;
    text-decoration: none;
}

/* Toolbars */
.toolbar {
    display: flex;
    align-items: center;
    height: 36px;
    background: var(--green);
}

.toolbar button {
    display: flex;
    align-items: center;
    justify-content: center;
    flex: none;
    width: 36px;
    height: 36px;
}

.toolbar svg {
    width: 24px;
    height: 24px;
}

.main-toolbar {
    flex: none;
    padding-left: 1px;
}

.sep {
    flex: none;
    width: 8px;
    height: 32px;
    background: linear-gradient(#6a8c10, #6a8c10) 2px 0 / 1px 100% no-repeat;
}

.spacer {
    flex: 1;
}

.toolbar .orange {
    color: #e88a2c;
}

.toolbar .blue {
    color: #3880bd;
}

.toolbar .faded {
    color: #64802a;
}

.toolbar .pressed {
    background: #f7f0a5;
    border: 1px solid #efe03c;
}

.workspace {
    flex: 1;
    display: grid;
    grid-template-columns: 357px minmax(0, 1fr) 220px;
    grid-template-rows: minmax(0, 1fr);
    column-gap: 3px;
    min-height: 0;
    padding-left: 1px;
}

/* Sidebar */
.sidebar {
    display: flex;
    flex-direction: column;
    min-height: 0;
    border: 1px solid #666;
    background: #fff;
}

.fold {
    display: flex;
    align-items: center;
    flex: none;
    gap: 9px;
    height: 18px;
    padding-left: 8px;
    background: linear-gradient(#f0f0f0, #bfbfbf);
}

.fold svg {
    width: 9px;
    height: 9px;
    fill: none;
    stroke: #000;
    stroke-width: 2;
}

.sidebar hr {
    flex: none;
    width: calc(100% - 10px);
    margin: 3px 5px 2px;
    border: none;
    border-top: 1px solid #888;
}

.tree-panel {
    flex: 1;
    display: flex;
    flex-direction: column;
    min-height: 0;
    margin-bottom: 2px;
    border-top: 1px solid #888;
    border-bottom: 1px solid #888;
}

.search-row {
    display: flex;
    align-items: center;
    flex: none;
    gap: 8px;
    height: 29px;
    padding: 0 5px 0 4px;
}

.field {
    width: 100%;
    height: 23px;
    padding: 0 2px;
    border: 1px solid #e6e6e6;
    border-bottom-color: #868686;
    border-radius: 2px;
    background: #fff;
}

.field::placeholder {
    color: #5e5e5e;
    opacity: 1;
}

.small-btn {
    display: inline-flex;
    align-items: center;
    justify-content: center;
    flex: none;
    width: 20px;
    height: 20px;
    border: 1px solid #ccc;
    border-radius: 3px;
    background: #fdfdfd;
}

.small-btn svg {
    width: 16px;
    height: 16px;
}

.tree-box {
    flex: 1;
    display: flex;
    min-height: 0;
    margin: 0 1px;
    border-top: 1px solid #e0e0e0;
}

.tree {
    flex: 1;
    min-width: 0;
    overflow: hidden;
    padding-left: 12px;
}

.tree ul {
    list-style: none;
}

.tree ul ul {
    padding-left: 19px;
}

/* dotted guide along each list of siblings */
.tree li {
    background: repeating-linear-gradient(#999 0 1px, transparent 1px 2px) 4px 0 / 1px 100% no-repeat;
}

.tree li:last-child {
    background-size: 1px 9px;
}

.tree .more > li:last-child {
    background-size: 1px 1000px;
}

.row {
    display: flex;
    align-items: center;
    height: 18px;
    white-space: nowrap;
    background: repeating-linear-gradient(90deg, #999 0 1px, transparent 1px 2px) 4px 9px / 10px 1px no-repeat;
}

.row.leaf {
    padding-left: 13px;
}

.row svg {
    flex: none;
    width: 16px;
    height: 16px;
    margin-right: 2px;
}

.row span {
    padding: 1px 4px;
}

.row .selected {
    color: #fff;
    background: #0078d7;
    outline: 1px dotted #ff8728;
}

.exp {
    flex: none;
    width: 9px;
    height: 9px;
    margin-right: 4px;
    border: 1px solid #999;
    border-radius: 1px;
    background: #fafafa;
    color: var(--navy);
    font-size: 10px;
    line-height: 7px;
}

.box-violet {
    color: #59447c;
}

.box-red {
    color: #b92025;
}

.box-green {
    color: #a9d331;
}

.vscroll {
    display: flex;
    flex: none;
    width: 11px;
    padding: 17px 0 17px 3px;
    background: var(--light);
}

.vscroll span {
    width: 2px;
    background: #888;
}

.tree-box .vscroll {
    padding-bottom: 54px;
}

.hscroll {
    flex: none;
    height: 17px;
    margin: 0 1px;
    padding: 7px 116px 0 18px;
    background: var(--light);
}

.hscroll span {
    display: block;
    height: 2px;
    background: #888;
}

/* Content */
.content {
    min-width: 0;
    background: var(--gray);
}

.content-head {
    display: grid;
    grid-template-columns: 1fr auto 1fr;
    align-items: center;
    background: #666;
}

.content-head .toolbar {
    justify-self: start;
}

.content-head h2 {
    font-size: 12px;
    color: #fff;
}

.cards {
    display: flex;
    flex-direction: column;
    gap: 6px;
    padding: 3px;
}

.card-pair {
    display: grid;
    grid-template-columns: 10fr 11fr;
    gap: 6px;
}

.card {
    background: #fff;
}

.card h3 {
    padding: 0 8px;
    font-size: 12px;
    line-height: 38px;
    background: var(--head);
}

.form {
    display: grid;
    grid-auto-rows: 24px;
    column-gap: 3px;
    align-items: center;
    padding: 11px 6px 31px;
}

.form label {
    white-space: nowrap;
}

.form > label, .name-label label {
    text-align: right;
}

.form .check {
    grid-column: 2;
    display: flex;
    align-items: center;
    gap: 3px;
    text-align: left;
}

.form-general {
    grid-template-columns: 110px 1fr;
}

.form-chain {
    grid-template-columns: 104px 161px;
    grid-template-rows: 24px 24px 24px 28px 16px;
    column-gap: 2px;
    padding: 11px 4px 7px;
}

.form-chain .check {
    grid-row: 5;
}

.name-label {
    display: flex;
    align-items: center;
    justify-content: space-between;
}

.num {
    width: 32px;
    padding-right: 5px;
    text-align: right;
}

.with-icon {
    display: flex;
    align-items: center;
    padding-right: 1px;
}

.with-icon input {
    flex: 1;
    min-width: 0;
}

.icon-btn, .icon-btn svg {
    display: block;
    width: 16px;
    height: 16px;
}

.year {
    width: 83px;
}

.year input {
    padding-right: 6px;
    text-align: right;
}

.auto {
    flex: none;
    width: 18px;
    height: 18px;
    border: 1px solid #9fd0f5;
    border-radius: 2px;
    background: var(--green);
    color: #fff;
    font-size: 16px;
    line-height: 16px;
    text-align: center;
}

input[type="checkbox"] {
    appearance: none;
    width: 13px;
    height: 13px;
    border: 1px solid #666;
    border-radius: 3px;
    background: #f3f3f3;
}

input[type="checkbox"]:disabled {
    display: grid;
    place-items: center;
    border-color: #bfbfbf;
    background: #bfbfbf;
}

input[type="checkbox"]:disabled::before {
    content: "";
    width: 7px;
    height: 4px;
    border: solid #fff;
    border-width: 0 0 1px 1px;
    transform: rotate(-45deg);
}

select {
    appearance: none;
    height: 23px;
    padding: 0 18px 0 3px;
    border: 1px solid #d0d0d0;
    border-bottom-color: #aaa;
    border-radius: 2px;
    background: #fdfdfd url("data:image/svg+xml,%3Csvg xmlns='http://www.w3.org/2000/svg' viewBox='0 0 10 6'%3E%3Cpath d='M1 1l4 4 4-4' fill='none' stroke='%23555'/%3E%3C/svg%3E") right 3px center / 10px 6px no-repeat;
}

.list {
    grid-row: 2 / span 3;
    grid-column: 2;
    align-self: start;
    height: 75px;
    border: 1px solid #828790;
    border-radius: 0;
    background: #fff;
}

/* Investitionen */
.invest {
    padding: 3px 8px 16px;
}

.invest table {
    border-collapse: separate;
    border-spacing: 0 2px;
    table-layout: fixed;
    width: 557px;
}

.invest th, .invest td {
    padding: 0;
    font-weight: normal;
}

.invest thead th {
    height: 33px;
    padding: 0 17px 5px 0;
    vertical-align: bottom;
    line-height: 14px;
    white-space: nowrap;
}

.invest thead td:nth-child(1) {
    width: 129px;
}

.invest thead th:nth-child(2), .invest thead th:nth-child(4), .invest thead th:nth-child(6) {
    width: 97px;
}

.invest thead td:nth-child(3) {
    width: 40px;
}

.invest thead td:nth-child(5) {
    width: 38px;
}

.invest thead td:nth-child(7) {
    width: 36px;
}

.invest tbody th, .invest tbody td {
    height: 22px;
    background: #c8c8c8;
}

.invest tbody .plain {
    padding-left: 3px;
    background: none;
    line-height: 0;
}

.row-head {
    display: flex;
    align-items: center;
    padding: 0 3px 0 6px;
}

.row-head label {
    flex: 1;
    text-align: right;
}

.invest sup {
    align-self: flex-start;
    color: #fff;
    font-size: 10px;
    line-height: 8px;
    vertical-align: top;
}

.unit {
    display: flex;
    justify-content: space-between;
    padding: 0 10px 0 3px;
}

.amount {
    display: flex;
    align-items: center;
    height: 22px;
    padding-right: 24px;
    border: 1px solid #e4e4e4;
    border-radius: 2px;
    background: var(--light);
}

.amount input {
    width: 100%;
    min-width: 0;
    text-align: right;
}

.amount.editable {
    gap: 6px;
    padding-right: 0;
    background: #fff;
}

.editable input {
    color: #777;
}

.finance {
    display: flex;
    align-items: center;
    gap: 3px;
}

.finance label {
    width: 126px;
    text-align: right;
}

.finance select {
    width: 159px;
}

/* Notes */
.note-head {
    display: flex;
    align-items: center;
    padding-right: 5px;
    background: var(--head);
}

.note-head .toolbar {
    height: 38px;
}

.note-head h3 {
    flex: 1;
}

.edit-btn {
    display: flex;
    align-items: center;
    justify-content: center;
    width: 33px;
    height: 30px;
    border: 1px solid #ccc;
    border-radius: 4px;
    background: #fdfdfd;
}

.edit-btn svg {
    width: 16px;
    height: 16px;
}

.note {
    display: flex;
    height: 55px;
}

.note textarea {
    flex: 1;
    display: block;
    min-width: 0;
    height: 55px;
    padding-top: 1px;
    resize: none;
    overflow: hidden;
    white-space: pre;
}

/* Results */
.results {
    display: flex;
    flex-direction: column;
    min-width: 0;
    padding-bottom: 24px;
}

.results-head {
    display: flex;
    align-items: center;
    gap: 2px;
    height: 21px;
    padding: 1px 0 0 1px;
}

.results-head select {
    flex: 1;
    min-width: 0;
    height: 20px;
    padding-left: 2px;
    border-color: #e6e6e6;
}

.results-head .auto {
    width: 21px;
    height: 20px;
    border: 2px solid #1b6ea8;
    border-radius: 4px;
}

.results-body {
    flex: 1;
    display: flex;
    flex-direction: column;
    gap: 5px;
    padding: 2px;
    background: #7a7a7a;
}

.result {
    padding: 7px 15px 4px 9px;
    background: #fff;
    font-family: "Liberation Sans", Arial, sans-serif;
    color: #222;
}

.result-head {
    display: flex;
    justify-content: space-between;
}

.result h4 {
    font-size: 17px;
    font-weight: normal;
    line-height: 21px;
}

.result p {
    font-size: 13px;
    line-height: 15px;
}

.lamp {
    width: 18px;
    height: 18px;
    margin-top: 4px;
    border: 1px solid #222;
    border-radius: 50%;
}

.lamp.red {
    border-color: #8b4a47;
    background: var(--red);
}

.lamp.green {
    border-color: #76a51c;
    background: #83b623;
}

.gauges {
    display: flex;
    flex-direction: column;
    gap: 7px;
    margin: 5px 1px 12px 5px;
    font-size: 9px;
    color: #000;
}

.gauge {
    display: flex;
    gap: 4px;
    box-shadow: 1px 1px 2px #888;
}

/* the label never makes its gauge taller */
.axis {
    display: flex;
    justify-content: center;
    width: 15px;
    contain: size;
    line-height: 15px;
    writing-mode: vertical-rl;
    transform: rotate(180deg);
    white-space: nowrap;
    background: #d5d5d5;
}

.axis small {
    font-size: 8px;
}

.class-box {
    flex: 1;
    display: flex;
    flex-direction: column;
    align-items: center;
    height: 132px;
    padding-top: 15px;
    background: #f9d83c;
    color: #fff;
    text-shadow: 1px 1px 2px #8a7410;
}

.letter {
    font-size: 122px;
    line-height: 100px;
}

.value {
    align-self: flex-end;
    margin-right: 16px;
    font-size: 13px;
    line-height: 14px;
}

.bars {
    flex: 1;
    container-type: inline-size;
    padding-bottom: 1px;
}

.bar {
    height: 16px;
    padding-left: 5px;
    line-height: 16px;
    white-space: nowrap;
}

.bar.gray {
    background: #d5d5d5;
}

.bar.blue {
    background: var(--blue);
}

.bar.scale {
    background: linear-gradient(90deg, #5c9a10, #a9d331 28%, #f9d83c 50%, #e3902f 75%, var(--red)) 0 0 / 100cqw 100% no-repeat;
}

.steps {
    flex: 1;
    display: flex;
    gap: 2px;
    padding-right: 2px;
}

.steps span {
    flex-basis: 0;
    min-width: 0;
    height: 17px;
    color: #fff;
    font-weight: bold;
    line-height: 17px;
    text-align: right;
    background: var(--red);
}
```
